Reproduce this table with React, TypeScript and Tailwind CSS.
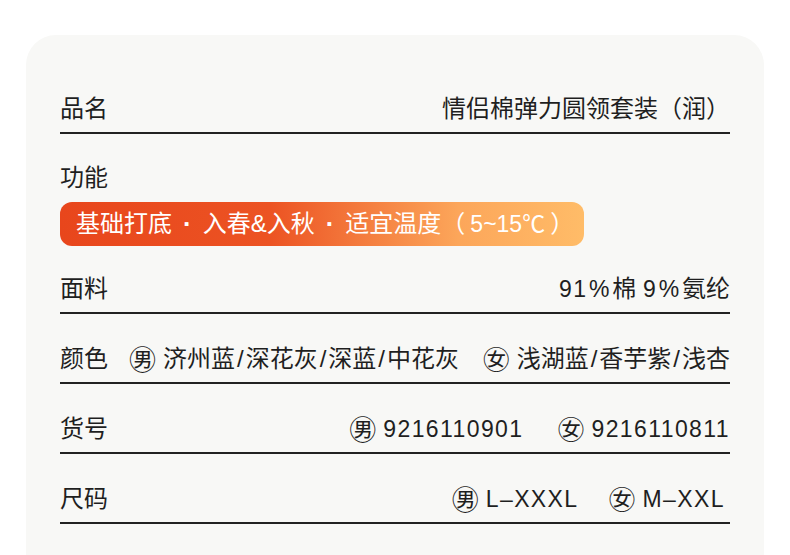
const FONT = { fontFamily: '"Liberation Sans", "Noto Sans CJK SC", sans-serif' };
const CJK = { fontFamily: '"Noto Sans CJK SC", sans-serif' };

function Sex({ g }: { g: "m" | "f" }) {
  return (
    <span className="mr-[7px] inline-block text-[27px] leading-[32px]" style={CJK}>
      {g === "m" ? "㊚" : "㊛"}
    </span>
  );
}

function Num({ children }: { children: React.ReactNode }) {
  return <span className="text-[23px] tracking-[1.4px]">{children}</span>;
}

function Pct() {
  return <span className="mx-[1.5px]">%</span>;
}

function Slash() {
  return <span className="mx-[2px]">/</span>;
}

function Dot() {
  return <span className="mx-[11px] text-[26px] font-bold">·</span>;
}

function Row({
  label,
  children,
  className = "pt-[29px]",
}: {
  label: string;
  children?: React.ReactNode;
  className?: string;
}) {
  return (
    <div
      className={`flex items-center justify-between border-b-2 border-[#222] pb-[7px] leading-[32px] ${className}`}
    >
      <span>{label}</span>
      {children}
    </div>
  );
}

export default function App() {
  return (
    <div className="min-h-[555px] bg-white pt-[35px]" style={FONT}>
      <div className="mx-[26px] rounded-t-[30px] bg-[#f8f8f6] px-[34px] pt-[29px] pb-[40px] text-[24px] text-[#1f1f1f]">
        <Row label="品名">
          <span>情侣棉弹力圆领套装（润）</span>
        </Row>

        <div className="pt-[28px]">
          <div className="leading-[32px]">功能</div>
          <div className="mt-[8px] inline-flex h-[44px] items-center rounded-[12px] bg-[linear-gradient(90deg,#e8461c_0%,#ec5323_40%,#fca65a_76%,#ffbc68_100%)] pl-[16px] pr-[10px] text-white">
            <span>基础打底</span>
            <Dot />
            <span>入春&amp;入秋</span>
            <Dot />
            <span>
              适宜温度（<span className="mx-[5px] text-[23px]">5~15℃</span>）
            </span>
          </div>
        </div>

        <Row label="面料" className="pt-[27px]">
          <span>
            <Num>
              91<Pct />
            </Num>
            棉 <Num>
              9<Pct />
            </Num>
            氨纶
          </span>
        </Row>

        <Row label="颜色">
          <span className="mr-auto ml-[21px] flex items-center">
            <Sex g="m" />
            济州蓝<Slash />深花灰<Slash />深蓝<Slash />中花灰
          </span>
          <span className="flex items-center">
            <Sex g="f" />
            浅湖蓝<Slash />香芋紫<Slash />浅杏
          </span>
        </Row>

        <Row label="货号">
          <span className="flex items-center gap-[34px]">
            <span className="flex items-center">
              <Sex g="m" />
              <Num>9216110901</Num>
            </span>
            <span className="flex items-center">
              <Sex g="f" />
              <Num>9216110811</Num>
            </span>
          </span>
        </Row>

        <Row label="尺码">
          <span className="flex items-center gap-[30px] pr-[5px]">
            <span className="flex items-center">
              <Sex g="m" />
              <Num>L–XXXL</Num>
            </span>
            <span className="flex items-center">
              <Sex g="f" />
              <Num>M–XXL</Num>
            </span>
          </span>
        </Row>
      </div>
    </div>
  );
}
